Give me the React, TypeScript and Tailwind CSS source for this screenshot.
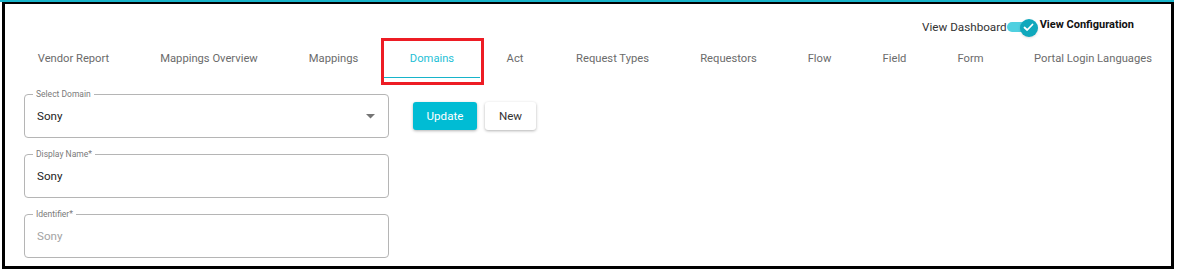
import React from 'react';

// widths measured from the design so labels land on the same centers
const tabs: [string, string][] = [
    ['Vendor Report', 'w-[123px]'],
    ['Mappings Overview', 'w-[148px]'],
    ['Mappings', 'w-[101px]'],
    ['Domains', 'w-[96px]'],
    ['Act', 'w-[70px]'],
    ['Request Types', 'w-[125px]'],
    ['Requestors', 'w-[107px]'],
    ['Flow', 'w-[75px]'],
    ['Field', 'w-[75px]'],
    ['Form', 'w-[77px]'],
    ['Portal Login Languages', 'w-[168px]'],
];

function OutlinedField({ label, value, select, disabled }: { label: string; value: string; select?: boolean; disabled?: boolean }) {
    return (
        <div className="relative h-[44px] w-[365px] rounded-[4px] border border-[#b5b5b5] flex items-center pl-[12px] pr-[12px]">
            <span className="absolute left-[8px] -top-[7px] bg-white px-[3px] text-[8.5px] leading-[12px] text-[#7a7a7a]">{label}</span>
            <span className={`flex-1 pt-[1px] text-[11.6px] ${disabled ? 'text-[#a3a3a3]' : 'text-[#222]'}`}>{value}</span>
            {select && (
                <svg width="9" height="5" viewBox="0 0 9 5" className="mr-[1px] mt-[1px]">
                    <path d="M0 0 L9 0 L4.5 4.5 Z" fill="#757575" />
                </svg>
            )}
        </div>
    );
}

export default function App() {
    return (
        <div className="w-[1177px] h-[271px] bg-white font-['Roboto',sans-serif]">
            <div className="w-[1174px] border-t-2 border-[#19b5cb]">
                <div className="relative ml-[2px] w-[1172px] h-[267px] overflow-hidden border-black border-l-[3px] border-r-[3px] border-t-2 border-b-[3px]">
                    {/* Dashboard / Configuration switch */}
                    <div className="flex justify-end items-center h-[24px] mt-[12px] pr-[37px]">
                        <span className="text-[11.7px] text-[#333] whitespace-nowrap">View Dashboard</span>
                        <div className="relative w-[31px] h-[18px] mt-[1px] shrink-0">
                            <div className="absolute left-0 top-[2px] w-[22px] h-[10px] rounded-full bg-[#4fd0e0]" />
                            <div className="absolute right-0 -top-[1px] w-[18px] h-[18px] rounded-full bg-[#0fa8bc] flex items-center justify-center shadow-sm">
                                <svg width="11" height="9" viewBox="0 0 11 9">
                                    <path d="M1.5 4.5 L4.2 7 L9.5 1.5" stroke="#fff" strokeWidth="1.8" fill="none" strokeLinecap="round" strokeLinejoin="round" />
                                </svg>
                            </div>
                        </div>
                        <span className="ml-[2px] mb-[5px] text-[11px] font-bold text-[#111] whitespace-nowrap">View Configuration</span>
                    </div>

                    {/* Tabs */}
                    <div className="flex h-[39px] pl-[7px]">
                        {tabs.map(([t, w]) => (
                            <div
                                key={t}
                                className={`relative shrink-0 whitespace-nowrap flex items-center justify-center text-[11.2px] ${w} ${t === 'Domains' ? 'text-[#1fbfd6]' : 'text-[#6b6b6b]'}`}
                            >
                                {t}
                                {t === 'Domains' && <div className="absolute left-0 right-0 bottom-[1px] h-[1px] bg-[#17b4ca]" />}
                            </div>
                        ))}
                    </div>

                    {/* Form */}
                    <div className="flex gap-[24px] mt-[15px] pl-[19px]">
                        <div className="flex flex-col gap-[16px]">
                            <OutlinedField label="Select Domain" value="Sony" select />
                            <OutlinedField label="Display Name*" value="Sony" />
                            <OutlinedField label="Identifier*" value="Sony" disabled />
                        </div>
                        <div className="flex gap-[8px] mt-[8px] h-[28px]">
                            <button className="w-[64px] h-[28px] pt-[1px] rounded-[3px] bg-[#00bcd4] text-white text-[11.6px] shadow-[0_1px_3px_rgba(0,0,0,0.3)]">Update</button>
                            <button className="w-[51px] h-[28px] pt-[1px] rounded-[3px] bg-white text-[#333] text-[11.6px] shadow-[0_1px_3px_rgba(0,0,0,0.3)]">New</button>
                        </div>
                    </div>

                    {/* highlight annotation */}
                    <div className="absolute left-[376px] top-[34px] w-[103px] h-[47px] border-[3px] border-[#ed1c24]" />
                </div>
            </div>
        </div>
    );
}
